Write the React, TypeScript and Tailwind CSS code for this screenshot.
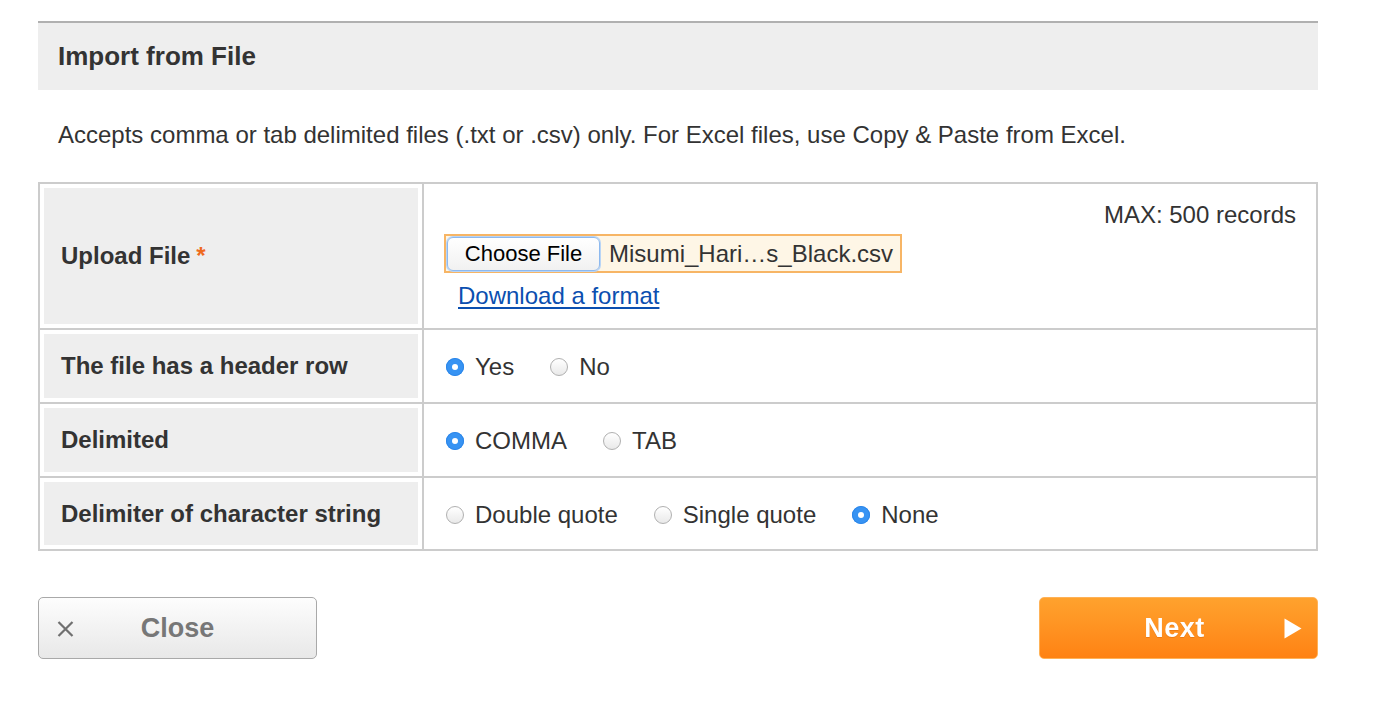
import React from "react";

function Radio({ checked }: { checked?: boolean }) {
  if (checked) {
    return (
      <span className="w-[18px] h-[18px] rounded-full bg-[#3793f3] flex items-center justify-center shrink-0 shadow-[inset_0_0_0_1px_#2c86e8]">
        <span className="w-[6px] h-[6px] rounded-full bg-white" />
      </span>
    );
  }
  return (
    <span className="w-[18px] h-[18px] rounded-full border border-[#b0b0b0] bg-linear-to-b from-white to-[#e9e9e9] shrink-0" />
  );
}

function Option({ label, checked }: { label: string; checked?: boolean }) {
  return (
    <label className="flex items-center gap-[11px] mr-[36px]">
      <Radio checked={checked} />
      <span className="text-[24px] leading-[28px] text-[#333]">{label}</span>
    </label>
  );
}

function LabelCell({ children }: { children: React.ReactNode }) {
  return (
    <div className="w-[384px] shrink-0 p-[4px] border-r-2 border-[#cccccc]">
      <div className="h-full bg-[#eeeeee] flex items-center pl-[17px] text-[24px] font-bold text-[#333]">
        {children}
      </div>
    </div>
  );
}

export default function App() {
  return (
    <div className="w-[1374px] h-[728px] bg-white font-['Liberation_Sans',Arial,sans-serif] text-[#333]">
      <div className="ml-[38px] w-[1280px] pt-[21px]">
        <div className="border-t-2 border-[#b0b0b0] h-[69px] bg-[#eeeeee] flex items-center pl-[20px]">
          <h1 className="text-[26px] font-bold text-[#333]">Import from File</h1>
        </div>

        <p className="mt-[31px] pl-[20px] text-[24px] leading-[28px] text-[#333]">
          Accepts comma or tab delimited files (.txt or .csv) only. For Excel files, use Copy &amp; Paste from Excel.
        </p>

        <div className="mt-[33px] border-2 border-[#cccccc]">
          {/* Row 1 */}
          <div className="flex h-[146px] border-b-2 border-[#cccccc]">
            <LabelCell>
              Upload File<span className="text-[#ee6a1e] ml-[6px]">*</span>
            </LabelCell>
            <div className="flex-1 flex flex-col pt-[17px] pr-[20px] pl-[20px]">
              <div className="self-end text-[24px] leading-[28px] text-[#333]">MAX: 500 records</div>
              <div className="mt-[5px] w-[458px] h-[39px] border-2 border-[#f7b565] bg-[#fef6e6] flex items-center pl-[1px]">
                <div className="w-[153px] h-[34px] rounded-[6px] border border-[#8db9ef] shadow-[0_0_0_1px_#b9d5f6] bg-linear-to-b from-white to-[#f1f1f1] flex items-center justify-center text-[22px] text-black">
                  Choose File
                </div>
                <span className="ml-[9px] text-[24px] text-[#333]">Misumi_Hari…s_Black.csv</span>
              </div>
              <a href="#" className="mt-[9px] ml-[14px] self-start text-[24px] leading-[28px] text-[#0b4fb0] underline decoration-[2px] underline-offset-[3px]">
                Download a format
              </a>
            </div>
          </div>

          {/* Row 2 */}
          <div className="flex h-[74px] border-b-2 border-[#cccccc]">
            <LabelCell>The file has a header row</LabelCell>
            <div className="flex-1 flex items-center pl-[22px] pt-[2px]">
              <Option label="Yes" checked />
              <Option label="No" />
            </div>
          </div>

          {/* Row 3 */}
          <div className="flex h-[74px] border-b-2 border-[#cccccc]">
            <LabelCell>Delimited</LabelCell>
            <div className="flex-1 flex items-center pl-[22px] pt-[2px]">
              <Option label="COMMA" checked />
              <Option label="TAB" />
            </div>
          </div>

          {/* Row 4 */}
          <div className="flex h-[71px]">
            <LabelCell>Delimiter of character string</LabelCell>
            <div className="flex-1 flex items-center pl-[22px] pt-[2px]">
              <Option label="Double quote" />
              <Option label="Single quote" />
              <Option label="None" checked />
            </div>
          </div>
        </div>

        <div className="mt-[46px] flex justify-between">
          <button className="relative w-[279px] h-[62px] rounded-[5px] border border-[#a9a9a9] bg-linear-to-b from-[#fdfdfd] to-[#e8e8e8] flex items-center justify-center">
            <svg className="absolute left-[18px] top-[23px]" width="17" height="16" viewBox="0 0 17 16">
              <path d="M1.5 1 L15.5 15 M15.5 1 L1.5 15" stroke="#707070" strokeWidth="2.2" fill="none" />
            </svg>
            <span className="text-[27px] font-bold text-[#777777]">Close</span>
          </button>
          <button className="relative w-[279px] h-[62px] rounded-[5px] border border-[#ffb257] bg-linear-to-b from-[#ffa22d] to-[#ff8212] flex items-center justify-center pr-[8px]">
            <span className="text-[27px] font-bold text-white tracking-[0.5px] drop-shadow-[0_1px_0_rgba(200,90,0,0.35)]">Next</span>
            <svg className="absolute right-[15px] top-[20px]" width="18" height="21" viewBox="0 0 18 21">
              <path d="M0.5 0.5 L17.5 10.5 L0.5 20.5 Z" fill="#ffffff" />
            </svg>
          </button>
        </div>
      </div>
    </div>
  );
}
